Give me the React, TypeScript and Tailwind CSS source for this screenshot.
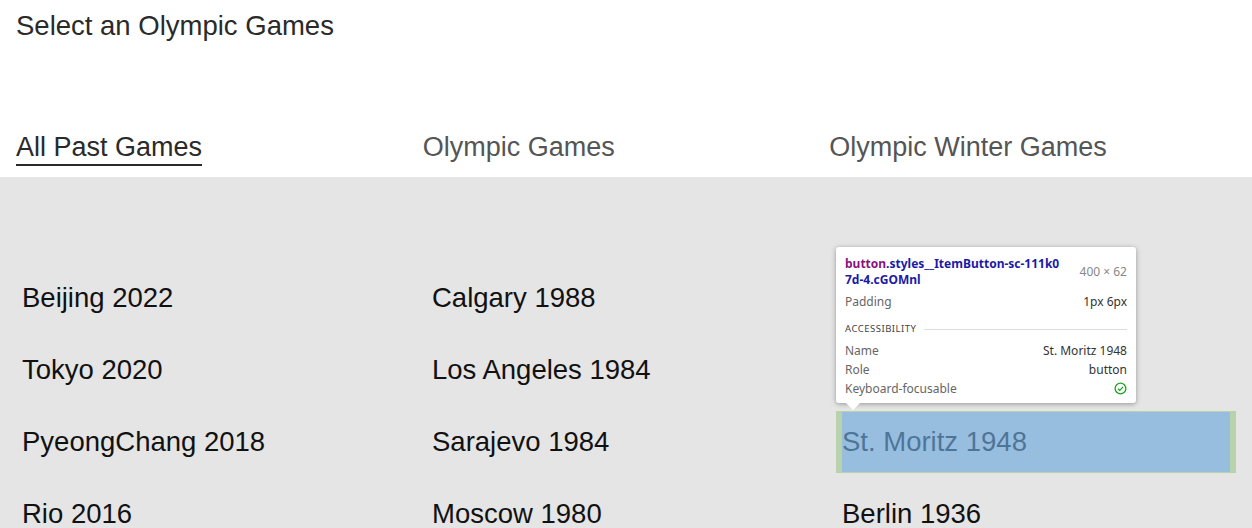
import React from "react";

const col1 = ["Beijing 2022", "Tokyo 2020", "PyeongChang 2018", "Rio 2016"];
const col2 = ["Calgary 1988", "Los Angeles 1984", "Sarajevo 1984", "Moscow 1980"];
const col3 = ["", "", "St. Moritz 1948", "Berlin 1936"];

function Tooltip() {
  return (
    <div
      className="absolute left-0 bottom-[calc(100%+8px)] w-[300px] rounded-[3px] bg-white px-[9px] pt-[9px] pb-[5px] shadow-[0_1px_5px_rgba(0,0,0,0.35)] z-10"
      style={{ fontFamily: '"Noto Sans", "Open Sans", sans-serif' }}
    >
      <div className="flex items-center justify-between">
        <div className="text-[12px] font-bold leading-[16px] text-[#1a1aa6]">
          <div>
            <span className="text-[#881280]">button</span>.styles__ItemButton-sc-111k0
          </div>
          <div>7d-4.cGOMnl</div>
        </div>
        <div className="text-[12px] text-[#888] leading-[16px]">400 × 62</div>
      </div>
      <div className="mt-[5px] flex justify-between text-[12px] leading-[18px]">
        <span className="text-[#666]">Padding</span>
        <span className="text-[#333]">1px 6px</span>
      </div>
      <div className="mt-[10px] flex items-center gap-[8px]">
        <span className="text-[9.5px] tracking-[0.5px] text-[#444] leading-[16px]">ACCESSIBILITY</span>
        <div className="h-px flex-1 bg-[#ddd]" />
      </div>
      <div className="mt-[4px] flex justify-between text-[12px] leading-[19px]">
        <span className="text-[#666]">Name</span>
        <span className="text-[#333]">St. Moritz 1948</span>
      </div>
      <div className="flex justify-between text-[12px] leading-[19px]">
        <span className="text-[#666]">Role</span>
        <span className="text-[#333]">button</span>
      </div>
      <div className="flex items-center justify-between text-[12px] leading-[19px]">
        <span className="text-[#666]">Keyboard-focusable</span>
        <svg width="13" height="13" viewBox="0 0 14 14" fill="none">
          <circle cx="7" cy="7" r="5.8" stroke="#1ea41e" strokeWidth="1.4" />
          <path d="M4.3 7.2 L6.2 9 L9.8 5.3" stroke="#1ea41e" strokeWidth="1.4" />
        </svg>
      </div>
      <div className="absolute left-[10px] top-full h-0 w-0 border-l-[7px] border-r-[7px] border-t-[7px] border-l-transparent border-r-transparent border-t-white" />
    </div>
  );
}

function Item({ label, highlight }: { label: string; highlight?: boolean }) {
  return (
    <div className="relative h-[62px]">
      {label && (
        <button className="flex h-full w-full items-center px-[6px] py-px text-left text-[27.5px] text-[#111]">
          {label}
        </button>
      )}
      {highlight && (
        <>
          <div className="pointer-events-none absolute inset-0 border-x-[6px] border-y border-[rgba(147,196,125,0.55)] bg-[rgba(111,168,220,0.66)] bg-clip-padding" />
          <Tooltip />
        </>
      )}
    </div>
  );
}

export default function App() {
  return (
    <div
      className="h-[528px] w-[1252px] overflow-hidden bg-white"
      style={{ fontFamily: '"Liberation Sans", Arial, sans-serif' }}
    >
      <div className="flex h-[177px] flex-col px-4">
        <h1 className="pt-[10px] text-[27.5px] leading-[32px] text-[#2a2a2a]">Select an Olympic Games</h1>
        <div className="mt-auto grid grid-cols-3 pb-[11px]">
          <div>
            <span className="inline-block border-b-2 border-[#2a2a2a] pb-[2px] text-[27px] leading-[30px] text-[#2a2a2a]">
              All Past Games
            </span>
          </div>
          <div>
            <span className="inline-block pb-[4px] text-[27px] leading-[30px] text-[#555]">Olympic Games</span>
          </div>
          <div>
            <span className="inline-block pb-[4px] text-[27px] leading-[30px] text-[#555]">Olympic Winter Games</span>
          </div>
        </div>
      </div>
      <div className="h-[351px] bg-[#e5e5e5] px-4 pt-[90px]">
        <div className="grid grid-cols-3 gap-[10px]">
          {col1.map((_, i) => (
            <React.Fragment key={i}>
              <Item label={col1[i]} />
              <Item label={col2[i]} />
              <Item label={col3[i]} highlight={i === 2} />
            </React.Fragment>
          ))}
        </div>
      </div>
    </div>
  );
}
